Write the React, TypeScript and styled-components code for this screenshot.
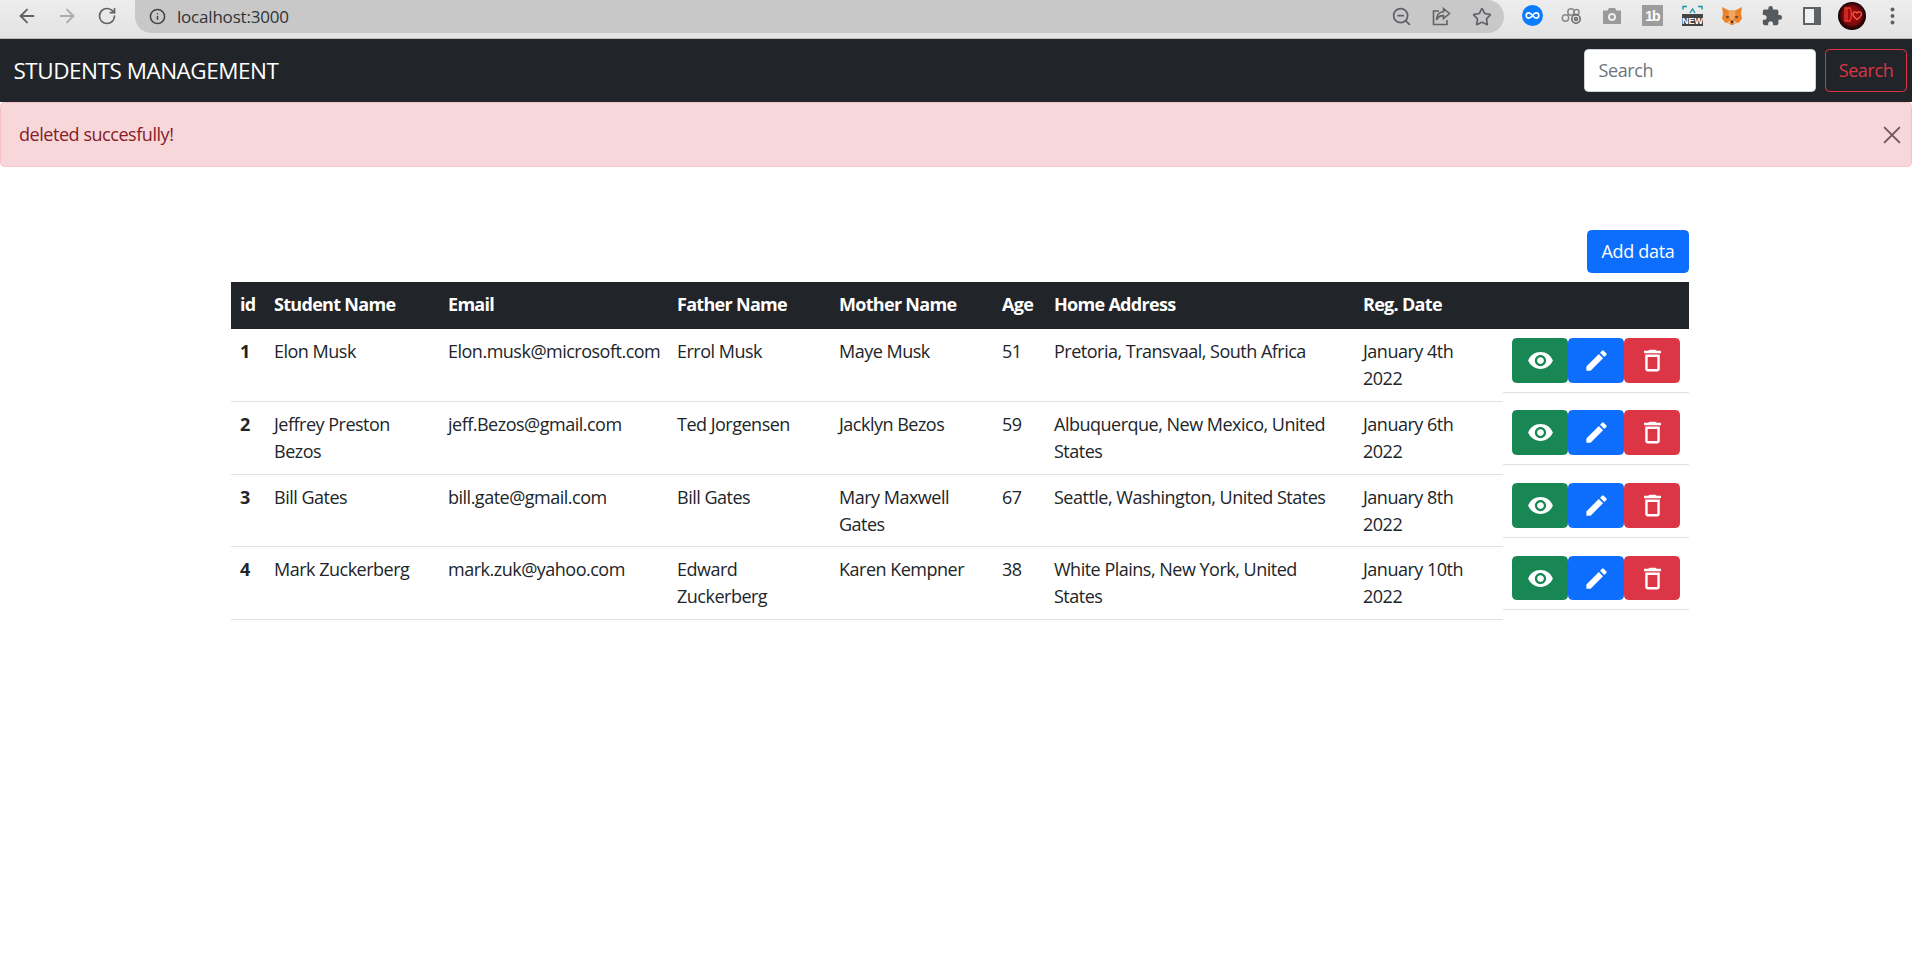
import React from 'react'
import styled, { createGlobalStyle } from 'styled-components'
import { ArrowLeft, ArrowRight, RotateCw, Info, ZoomOut, Star } from 'lucide-react'
import { MdRemoveRedEye, MdEdit, MdDeleteOutline, MdExtension } from 'react-icons/md'

const students = [
  {
    id: 1,
    name: 'Elon Musk',
    email: 'Elon.musk@microsoft.com',
    father: 'Errol Musk',
    mother: 'Maye Musk',
    age: 51,
    address: 'Pretoria, Transvaal, South Africa',
    date: 'January 4th 2022',
  },
  {
    id: 2,
    name: 'Jeffrey Preston Bezos',
    email: 'jeff.Bezos@gmail.com',
    father: 'Ted Jorgensen',
    mother: 'Jacklyn Bezos',
    age: 59,
    address: 'Albuquerque, New Mexico, United States',
    date: 'January 6th 2022',
  },
  {
    id: 3,
    name: 'Bill Gates',
    email: 'bill.gate@gmail.com',
    father: 'Bill Gates',
    mother: 'Mary Maxwell Gates',
    age: 67,
    address: 'Seattle, Washington, United States',
    date: 'January 8th 2022',
  },
  {
    id: 4,
    name: 'Mark Zuckerberg',
    email: 'mark.zuk@yahoo.com',
    father: 'Edward Zuckerberg',
    mother: 'Karen Kempner',
    age: 38,
    address: 'White Plains, New York, United States',
    date: 'January 10th 2022',
  },
]

const columns = [
  { label: 'id', width: 34 },
  { label: 'Student Name', width: 174 },
  { label: 'Email', width: 229 },
  { label: 'Father Name', width: 162 },
  { label: 'Mother Name', width: 163 },
  { label: 'Age', width: 52 },
  { label: 'Home Address', width: 309 },
  { label: 'Reg. Date', width: 149 },
  { label: '', width: 186 },
]

const App = () => (
  <>
    <GlobalStyle />
    <BrowserBar>
      <NavGroup>
        <ToolIcon><ArrowLeft size={22} color="#5f6368" strokeWidth={2} /></ToolIcon>
        <ToolIcon><ArrowRight size={22} color="#a9abae" strokeWidth={2} /></ToolIcon>
        <ToolIcon><RotateCw size={20} color="#5f6368" strokeWidth={2} /></ToolIcon>
      </NavGroup>
      <UrlBar>
        <UrlLeft>
          <Info size={17} color="#444" strokeWidth={2.2} />
          <UrlText>localhost:3000</UrlText>
        </UrlLeft>
        <UrlRight>
          <ToolIcon><ZoomOut size={21} color="#5f6368" strokeWidth={2} /></ToolIcon>
          <ToolIcon>
            <svg width="21" height="21" viewBox="0 0 21 21" fill="none" stroke="#5f6368" strokeWidth="1.6">
              <path d="M8 5H2.5v13.5H16V14" />
              <path d="M12.5 2.5l6 5-6 5V9.6C9 9.6 6.8 10.8 5.5 14c.2-5 3-8 7-8.2z" />
            </svg>
          </ToolIcon>
          <ToolIcon><Star size={20} color="#5f6368" strokeWidth={2} /></ToolIcon>
        </UrlRight>
      </UrlBar>
      <Extensions>
        <ToolIcon>
          <svg width="21" height="21" viewBox="0 0 21 21">
            <circle cx="10.5" cy="10.5" r="10.5" fill="#0a7cff" />
            <path d="M10.5 10.5c-1.5-2-2.5-2.6-3.7-2.6a2.6 2.6 0 0 0 0 5.2c1.2 0 2.2-.6 3.7-2.6zm0 0c1.5 2 2.5 2.6 3.7 2.6a2.6 2.6 0 0 0 0-5.2c-1.2 0-2.2.6-3.7 2.6z" fill="none" stroke="#fff" strokeWidth="1.6" />
          </svg>
        </ToolIcon>
        <ToolIcon>
          <svg width="22" height="20" viewBox="0 0 22 20" fill="none" stroke="#8a8a8a" strokeWidth="1.5">
            <circle cx="4.5" cy="12" r="3.2" />
            <circle cx="10" cy="6" r="3.2" />
            <circle cx="15.5" cy="6" r="2.6" />
            <circle cx="15" cy="13" r="4.2" stroke="#666" />
            <circle cx="15" cy="13" r="1.5" stroke="#666" />
          </svg>
        </ToolIcon>
        <ToolIcon>
          <svg width="20" height="18" viewBox="0 0 20 18">
            <path d="M1 3.5h4.5L7 1h6l1.500 2.500H19V17H1z" fill="#9a9a9a" />
            <circle cx="10" cy="10" r="4" fill="#ececec" />
            <circle cx="10" cy="10" r="2" fill="#9a9a9a" />
          </svg>
        </ToolIcon>
        <ToolIcon>
          <svg width="21" height="21" viewBox="0 0 21 21">
            <rect width="21" height="21" fill="#9c9c9c" />
            <text x="10.500" y="15.500" textAnchor="middle" letterSpacing="-1" fontFamily="Liberation Sans, sans-serif" fontSize="14" fontWeight="700" fill="#fff">1b</text>
          </svg>
        </ToolIcon>
        <ToolIcon>
          <svg width="21" height="21" viewBox="0 0 21 21">
            <path d="M1 4.500V1.500h4M16 1.500h4v3" fill="none" stroke="#1593a5" strokeWidth="1.400" />
            <path d="M8 8l2.500-4L13 8" fill="none" stroke="#1593a5" strokeWidth="1.400" />
            <rect y="9" width="21" height="12" fill="#444" />
            <text x="10.500" y="18.500" textAnchor="middle" fontFamily="Liberation Sans, sans-serif" fontSize="9" fontWeight="700" fill="#fff">NEW</text>
          </svg>
        </ToolIcon>
        <ToolIcon>
          <svg width="22" height="20" viewBox="0 0 22 20">
            <path d="M1 1l7 3.500h6L21 1l-1 6.500 1 5-3 4-4 1-2 1.500h-2l-2-1.500-4-1-3-4 1-5z" fill="#e9842b" />
            <path d="M8 4.500h6l.5 5-2 4h-3l-2-4z" fill="#f2a662" />
            <path d="M4.500 10l4 .5-2 2zM17.500 10l-4 .5 2 2z" fill="#5b3a22" />
            <path d="M9.500 15h3l-.8 2h-1.400z" fill="#2c2320" />
            <path d="M6 16.500l3.500-2-.5 3zM16 16.500l-3.500-2 .5 3z" fill="#f7cfa8" />
          </svg>
        </ToolIcon>
        <ToolIcon><MdExtension size={22} color="#555a5f" /></ToolIcon>
        <ToolIcon>
          <svg width="18" height="18" viewBox="0 0 18 18">
            <rect x="1" y="1" width="16" height="16" fill="#f1f1f1" stroke="#5f6368" strokeWidth="2" />
            <rect x="11" y="1" width="6" height="16" fill="#5f6368" />
          </svg>
        </ToolIcon>
        <ToolIcon>
          <svg width="28" height="28" viewBox="0 0 28 28">
            <defs>
              <radialGradient id="avatarGlow" cx="50%" cy="48%" r="50%">
                <stop offset="0%" stopColor="#b00d10" />
                <stop offset="65%" stopColor="#7d0a0c" />
                <stop offset="100%" stopColor="#0c0203" />
              </radialGradient>
            </defs>
            <circle cx="14" cy="14" r="14" fill="url(#avatarGlow)" />
            <path d="M7 6h5c2 4 2 8 0 13H7zM9 6v13" fill="none" stroke="#ef3b2c" strokeWidth="1.300" />
            <path d="M19 11c1.500-2 4.500-1.200 4.500 1 0 2.200-2.500 3.800-4.500 5.500-2-1.700-4-3.300-4-5.500 0-2.200 3-3 4-1z" fill="none" stroke="#f4604e" strokeWidth="1.300" />
          </svg>
        </ToolIcon>
        <ToolIcon>
          <svg width="5" height="18" viewBox="0 0 5 18" fill="#5f6368">
            <circle cx="2.500" cy="2.500" r="2" />
            <circle cx="2.500" cy="9" r="2" />
            <circle cx="2.500" cy="15.500" r="2" />
          </svg>
        </ToolIcon>
      </Extensions>
    </BrowserBar>

    <Navbar>
      <Brand>STUDENTS MANAGEMENT</Brand>
      <SearchForm>
        <SearchInput placeholder="Search" />
        <SearchButton>Search</SearchButton>
      </SearchForm>
    </Navbar>

    <Alert>
      <span>deleted succesfully!</span>
      <CloseButton aria-label="Close">
        <svg width="18" height="18" viewBox="0 0 16 16" fill="none" stroke="#6e5658" strokeWidth="1.600">
          <path d="M1 1l14 14M15 1L1 15" />
        </svg>
      </CloseButton>
    </Alert>

    <Content>
      <TopActions>
        <AddButton>Add data</AddButton>
      </TopActions>
      <Table>
        <colgroup>
          {columns.map((c, i) => (
            <col key={i} width={c.width} />
          ))}
        </colgroup>
        <thead>
          <tr>
            {columns.map((c, i) => (
              <HeadCell key={i}>{c.label}</HeadCell>
            ))}
          </tr>
        </thead>
        <tbody>
          {students.map((s) => (
            <tr key={s.id}>
              <IdCell>{s.id}</IdCell>
              <Cell>{s.name}</Cell>
              <Cell>{s.email}</Cell>
              <Cell>{s.father}</Cell>
              <Cell>{s.mother}</Cell>
              <Cell>{s.age}</Cell>
              <Cell>{s.address}</Cell>
              <Cell>{s.date}</Cell>
              <ActionCell>
                <ActionButton $bg="#198754"><MdRemoveRedEye size={27} /></ActionButton>
                <ActionButton $bg="#0d6efd"><MdEdit size={27} /></ActionButton>
                <ActionButton $bg="#dc3545"><MdDeleteOutline size={29} /></ActionButton>
              </ActionCell>
            </tr>
          ))}
        </tbody>
      </Table>
    </Content>
  </>
)

export default App

const GlobalStyle = createGlobalStyle`
  html, body {
    margin: 0;
    background: #fff;
  }
  body {
    font-family: "Open Sans", "Noto Sans", sans-serif;
    font-size: 18px;
    line-height: 27px;
    color: #212529;
  }
  * {
    box-sizing: border-box;
  }
`

const BrowserBar = styled.div`
  display: flex;
  align-items: flex-start;
  height: 39px;
  padding-left: 7px;
  background: linear-gradient(#ededed, #e3e3e3);
  border-bottom: 1px solid #bdbdbd;
`

const NavGroup = styled.div`
  display: flex;
  height: 33px;
`

const ToolIcon = styled.div`
  display: flex;
  align-items: center;
  justify-content: center;
  width: 40px;
  height: 31px;
  flex: none;
`

const UrlBar = styled.div`
  display: flex;
  align-items: center;
  justify-content: space-between;
  width: 1369px;
  height: 33px;
  margin-left: 8px;
  padding: 0 2px 0 14px;
  background: #c8c8c8;
  border-radius: 0 17px 17px 17px;
`

const UrlLeft = styled.div`
  display: flex;
  align-items: center;
  gap: 11px;
`

const UrlText = styled.span`
  font-size: 17px;
  letter-spacing: -0.2px;
  color: #303336;
`

const UrlRight = styled.div`
  display: flex;
`

const Extensions = styled.div`
  display: flex;
  margin-left: 8.5px;
`

const Navbar = styled.nav`
  display: flex;
  align-items: center;
  justify-content: space-between;
  height: 63px;
  padding: 0 5px 0 13.5px;
  background: #212529;
`

const Brand = styled.div`
  font-size: 22.5px;
  letter-spacing: -0.48px;
  color: #fff;
`

const SearchForm = styled.form`
  display: flex;
  gap: 9px;
`

const SearchInput = styled.input`
  width: 232px;
  height: 43px;
  padding: 0 13.5px 1px;
  font: inherit;
  letter-spacing: -0.4px;
  color: #212529;
  background: #fff;
  border: 1px solid #ced4da;
  border-radius: 4.5px;

  &::placeholder {
    color: #6c757d;
    opacity: 1;
  }
`

const SearchButton = styled.button`
  width: 82px;
  height: 43px;
  padding: 0 0 1px;
  font: inherit;
  letter-spacing: -0.4px;
  color: #dc3545;
  background: transparent;
  border: 1px solid #dc3545;
  border-radius: 4.5px;
`

const Alert = styled.div`
  position: relative;
  display: flex;
  align-items: center;
  height: 65px;
  padding: 0 18px;
  letter-spacing: -0.45px;
  color: #842029;
  background: #f8d7da;
  border: 1px solid #f5c2c7;
  border-radius: 4.5px;
`

const CloseButton = styled.button`
  position: absolute;
  top: 23px;
  right: 10px;
  display: flex;
  padding: 0;
  background: none;
  border: 0;
`

const Content = styled.main`
  margin: 63px 223px 0 231px;
`

const TopActions = styled.div`
  display: flex;
  justify-content: flex-end;
  margin-bottom: 9px;
`

const AddButton = styled.button`
  width: 102px;
  height: 43px;
  padding: 0;
  font: inherit;
  letter-spacing: -0.3px;
  color: #fff;
  background: #0d6efd;
  border: 1px solid #0d6efd;
  border-radius: 4.5px;
`

const Table = styled.table`
  width: 1458px;
  table-layout: fixed;
  border-collapse: collapse;
  letter-spacing: -0.5px;
`

const HeadCell = styled.th`
  height: 47px;
  padding: 0 0 2px 9px;
  font-weight: 700;
  letter-spacing: -0.7px;
  text-align: left;
  color: #fff;
  background: #212529;
`

const Cell = styled.td`
  padding: 9px;
  line-height: 26.9px;
  vertical-align: top;
  border-bottom: 1px solid #dee2e6;
`

const IdCell = styled(Cell)`
  font-weight: 700;
`

const ActionCell = styled.td`
  display: flex;
  padding: 9px;
  border-bottom: 1px solid #dee2e6;
`

const ActionButton = styled.button<{ $bg: string }>`
  display: flex;
  align-items: center;
  justify-content: center;
  width: 56px;
  height: 44.5px;
  padding: 0;
  color: #fff;
  background: ${(p) => p.$bg};
  border: 1px solid ${(p) => p.$bg};
  border-radius: 4.5px;
`
